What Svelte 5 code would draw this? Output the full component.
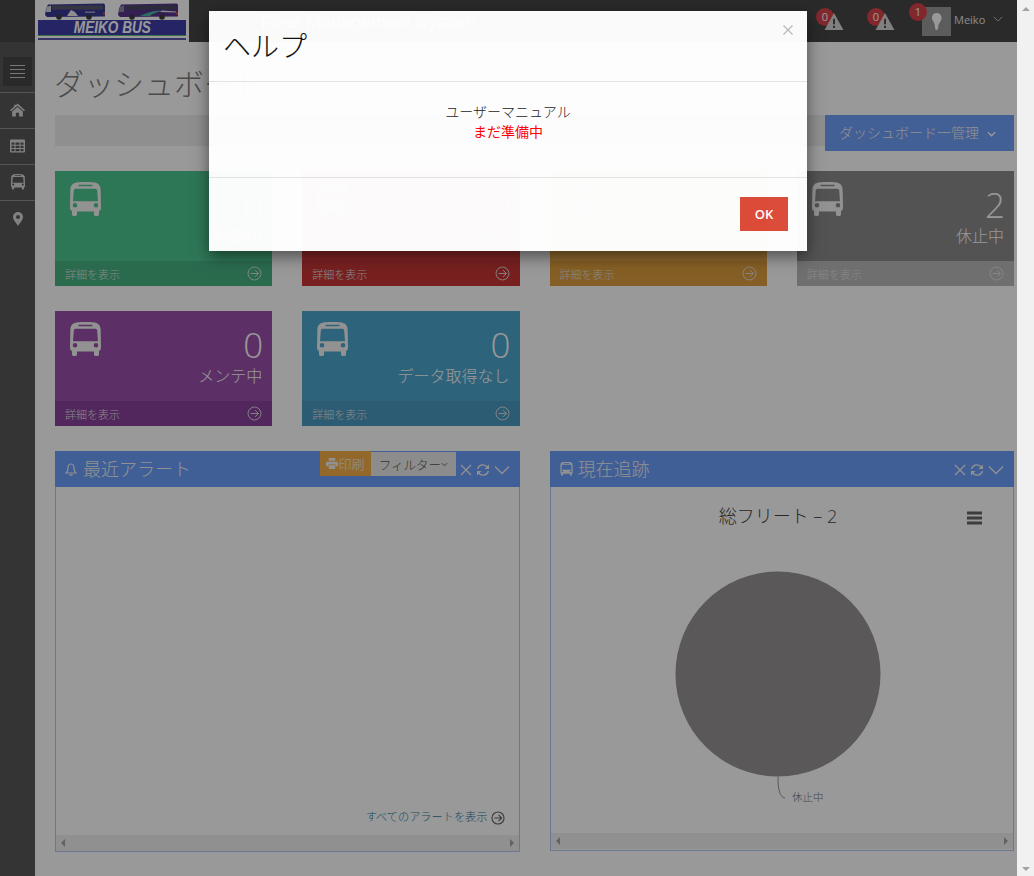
<script>
  const cards = [
    { cls: 'green', n: '0', label: '稼働中' },
    { cls: 'red', n: '0', label: '停止' },
    { cls: 'orange', n: '0', label: 'アイドル' },
    { cls: 'gray', n: '2', label: '休止中' },
    { cls: 'purple', n: '0', label: 'メンテ中' },
    { cls: 'teal', n: '0', label: 'データ取得なし' }
  ];
  const busPath = 'M8 0.3C12 -0.1 19 -0.1 23 0.3C28 0.9 30.2 3 30.6 7L31 25C31 27.5 30.5 28.5 29 29V32.5C29 34.6 24 34.6 24 32.5V29.5H7V32.5C7 34.6 2 34.6 2 32.5V29C0.5 28.5 0 27.5 0 25L0.4 7C0.8 3 3 0.9 8 0.3ZM8.5 2.8V4.2H22.5V2.8ZM6 6.7C4.6 6.7 4 7.3 3.800 8.300L3 19.300H28L27.200 8.300C27 7.300 26.400 6.700 25 6.700ZM5 21A2.300 2.300 0 1 0 5.010 25.600A2.300 2.300 0 1 0 5 21ZM26 21A2.300 2.300 0 1 0 26.010 25.600A2.300 2.300 0 1 0 26 21Z';
</script>

{#snippet bus(cls)}
  <svg class={cls} viewBox="0 0 31 35" aria-hidden="true"><path fill-rule="evenodd" d={busPath} /></svg>
{/snippet}

{#snippet circleArrow(cls)}
  <svg class={cls} viewBox="0 0 16 16" aria-hidden="true"><circle cx="8" cy="8" r="6.9" /><path d="M3.8 8H12M8.6 4.4L12.2 8L8.6 11.6" /></svg>
{/snippet}

{#snippet panelTools()}
  <div class="tools">
    <svg viewBox="0 0 14 14"><path d="M2 2L12 12M12 2L2 12" /></svg>
    <svg viewBox="0 0 14 14"><path d="M1.6 6A5.5 5.5 0 0 1 11.4 4.2M12.4 8A5.5 5.5 0 0 1 2.6 9.8" /><path class="solid" d="M13 1.5V6H8.5ZM1 12.5V8H5.5Z" /></svg>
    <svg class="wide" viewBox="0 0 16 14"><path d="M1 3.5L8 10.5L15 3.5" /></svg>
  </div>
{/snippet}

<div class="screen">
  <div class="page">
    <header class="topbar">
      <div class="logo">
        <div class="buses">
          <svg class="logobus" viewBox="0 0 60 17" aria-hidden="true">
            <path d="M3 1.500L59 0.500L60 2V13.500L2 14L0 12L1 6Z" fill="#3a3a96" />
            <path d="M7 2.500H58V6.500H7Z" fill="#5b5b70" />
            <path d="M1.500 4L6 2.500V9H1Z" fill="#d8d8e6" />
            <path d="M22 13L26 7L30 9L33 13Z" fill="#eee" />
            <path d="M40 8.500H50V10H40Z" fill="#9a9ac8" />
            <path d="M58 9H60V12H58Z" fill="#c04040" />
            <circle cx="14" cy="14" r="2.800" fill="#3d3d3d" />
            <circle cx="44" cy="14" r="2.800" fill="#3d3d3d" />
          </svg>
          <svg class="logobus" viewBox="0 0 60 17" aria-hidden="true">
            <path d="M3 1.500L59 0.500L60 2V13.500L2 14L0 12L1 6Z" fill="#55348a" />
            <path d="M7 2.500H57V6.500H7Z" fill="#4a4a60" />
            <path d="M1.500 4L6 2.500V9H1Z" fill="#8c8ca0" />
            <path d="M22 13C30 9 38 7 44 8C38 9 34 11 32 13Z" fill="#4fb4a0" />
            <path d="M44 7.500L58 8.500V9.500L42 9Z" fill="#e8e8f0" />
            <path d="M58 9H60V12H58Z" fill="#c04040" />
            <circle cx="14" cy="14" r="2.800" fill="#3d3d3d" />
            <circle cx="44" cy="14" r="2.800" fill="#3d3d3d" />
          </svg>
        </div>
        <div class="banner"><span>MEIKO BUS</span></div>
        <div class="stripes"></div>
      </div>
      <div class="appname">Fleet Management System</div>
      <div class="status">
        <div class="alert"><span class="badge">0</span><svg viewBox="0 0 20 18"><path fill-rule="evenodd" d="M10 0L20 18H0ZM9 6V12H11V6ZM9 13.500V16H11V13.500Z" /></svg></div>
        <div class="alert"><span class="badge">0</span><svg viewBox="0 0 20 18"><path fill-rule="evenodd" d="M10 0L20 18H0ZM9 6V12H11V6ZM9 13.500V16H11V13.500Z" /></svg></div>
        <div class="user">
          <span class="badge top">1</span>
          <div class="avatar"><svg viewBox="0 0 29 29"><path d="M14.500 6C18 6 20 8.500 19.500 12C19 14.500 17 16 16.500 18C16 20 16.500 22 15 23C13.800 23.600 13 22 13 20C13 18 12 15 10.500 13C9 9.500 11 6 14.500 6Z" /></svg></div>
          <span class="uname">Meiko</span>
          <svg class="uchev" viewBox="0 0 12 7"><path d="M1 1L6 6L11 1" /></svg>
        </div>
      </div>
    </header>

    <div class="body">
      <nav class="side">
        <div class="toggle"><span></span><span></span><span></span><span></span></div>
        <div class="item"><svg viewBox="0 0 14 12"><path d="M7 0L14 6.200L13 7.200L7 2L1 7.200L0 6.200L4 2.700V1H5.500V1.500ZM7 3.200L12 7.500V12H8.500V8.500H5.500V12H2V7.500Z" /></svg></div>
        <div class="item"><svg viewBox="0 0 15 13"><path fill-rule="evenodd" d="M1 0H14A1 1 0 0 1 15 1V12A1 1 0 0 1 14 13H1A1 1 0 0 1 0 12V1A1 1 0 0 1 1 0ZM1.500 3V5.300H4.500V3ZM5.500 3V5.300H9.500V3ZM10.500 3V5.300H13.500V3ZM1.500 6.300V8.500H4.500V6.300ZM5.500 6.300V8.500H9.500V6.300ZM10.500 6.300V8.500H13.500V6.300ZM1.500 9.500V11.700H4.500V9.500ZM5.500 9.500V11.700H9.500V9.500ZM10.500 9.500V11.700H13.500V9.500Z" /></svg></div>
        <div class="item">{@render bus('sidebus')}</div>
        <div class="item last"><svg class="pin" viewBox="0 0 10 14"><path fill-rule="evenodd" d="M5 0A5 5 0 0 1 10 5C10 8 6.500 11 5 14C3.500 11 0 8 0 5A5 5 0 0 1 5 0ZM5 3A2 2 0 1 0 5.010 7A2 2 0 1 0 5 3Z" /></svg></div>
      </nav>

      <main class="main">
        <h1>ダッシュボード</h1>
        <div class="barrow">
          <div class="crumb"></div>
          <div class="manage">ダッシュボード一管理 <svg viewBox="0 0 10 6"><path d="M1 1L5 5L9 1" /></svg></div>
        </div>

        <div class="grid">
          {#each cards as c}
            <section class="card {c.cls}">
              <div class="cbody">
                {@render bus('cardbus')}
                <div class="cnum">
                  <div class="num">{c.n}</div>
                  <div class="lab">{c.label}</div>
                </div>
              </div>
              <div class="cfoot"><span>詳細を表示</span>{@render circleArrow('carrow')}</div>
            </section>
          {/each}
        </div>

        <div class="panels">
          <section class="panel left">
            <div class="phead">
              <svg class="bell" viewBox="0 0 12 13"><path d="M6 1C3.500 1 3 3 3 5C3 8 2 9 1 10H11C10 9 9 8 9 5C9 3 8.500 1 6 1ZM4.500 11.300A1.600 1.600 0 0 0 7.500 11.300" /></svg>
              <span class="ptitle">最近アラート</span>
              <div class="btns">
                <span class="print"><svg viewBox="0 0 13 12"><path d="M3 0H10V3H3ZM1 4H12A1 1 0 0 1 13 5V9H10.500V7H2.500V9H0V5A1 1 0 0 1 1 4ZM3 8H10V12H3Z" /></svg>印刷</span>
                <span class="filter">フィルター<svg viewBox="0 0 8 5"><path d="M1 1L4 4L7 1" /></svg></span>
              </div>
              {@render panelTools()}
            </div>
            <div class="pbody">
              <div class="viewall">すべてのアラートを表示{@render circleArrow('varrow')}</div>
            </div>
            <div class="hscroll"><i class="la"></i><i class="ra"></i></div>
          </section>

          <section class="panel right">
            <div class="phead">
              <svg class="minibus" viewBox="0 0 31 35"><path fill-rule="evenodd" d={busPath} /></svg>
              <span class="ptitle">現在追跡</span>
              {@render panelTools()}
            </div>
            <div class="pbody chart">
              <svg viewBox="0 0 462 346" aria-label="総フリート">
                <text class="ctitle" x="227" y="36" text-anchor="middle">総フリート – 2</text>
                <path class="menu" d="M416 26H431M416 31H431M416 36H431" />
                <circle class="pie" cx="227" cy="187" r="102.500" />
                <path class="lead" d="M227 290C227 300 228 310 234 311" />
                <text class="legend" x="241" y="314">休止中</text>
              </svg>
            </div>
            <div class="hscroll"><i class="la"></i><i class="ra"></i></div>
          </section>
        </div>
      </main>
    </div>

    <div class="overlay">
      <div class="modal">
        <div class="mhead">
          <h2>ヘルプ</h2>
          <svg class="mclose" viewBox="0 0 10 10"><path d="M0.500 0.500L9.500 9.500M9.500 0.500L0.500 9.500" /></svg>
        </div>
        <div class="mbody">
          <div>ユーザーマニュアル</div>
          <div class="wip">まだ準備中</div>
        </div>
        <div class="mfoot"><button type="button">OK</button></div>
      </div>
    </div>
  </div>

  <aside class="vscroll"><i class="up"></i><i class="down"></i></aside>
</div>

<style>
  :global(body) { margin: 0; overflow: hidden; background: #fff; }
  .screen {
    display: flex; width: 1034px; height: 876px;
    font-family: "Open Sans", "Noto Sans CJK JP", sans-serif;
  }
  .page { position: relative; width: 1017px; height: 876px; overflow: hidden; display: flex; flex-direction: column; }
  .vscroll { width: 17px; background: #f1f1f1; display: flex; flex-direction: column; justify-content: space-between; align-items: center; padding: 7px 0 5px; box-sizing: border-box; }
  .vscroll i { width: 0; height: 0; border-left: 4px solid transparent; border-right: 4px solid transparent; }
  .vscroll .up { border-bottom: 4px solid #a3a3a3; }
  .vscroll .down { border-top: 4px solid #a3a3a3; }

  .topbar { height: 42px; flex: none; background: #474747; display: flex; align-items: stretch; padding-left: 35px; }
  .logo { width: 154px; background: #fff; padding: 3px 3px 0; box-sizing: border-box; display: flex; flex-direction: column; }
  .buses { display: flex; gap: 13px; padding-left: 7px; height: 17px; flex: none; }
  .logobus { width: 60px; height: 17px; }
  .banner { height: 15px; width: 148px; background: #3f3fa8; color: #fff; font: italic 700 16px/15px "Liberation Sans", sans-serif; text-align: center; overflow: hidden; }
  .banner span { display: inline-block; transform: scaleX(0.85); }
  .stripes { width: 148px; border-top: 1px solid #62c078; border-bottom: 2px solid #5a5ab0; height: 2px; }
  .appname { margin-left: 72px; color: #fff; font: 18px/44px "Liberation Sans", sans-serif; }
  .status { margin-left: auto; position: relative; display: flex; align-items: flex-start; padding-right: 13px; }
  .alert { position: relative; width: 51px; height: 42px; left: -9px; }
  .alert svg { position: absolute; left: 8px; top: 13px; width: 20px; height: 17px; fill: #d6d6d6; }
  .badge { position: absolute; width: 18px; height: 18px; border-radius: 50%; background: #d9444c; color: #fff; font-size: 11px; line-height: 18px; text-align: center; left: 0; top: 8px; }
  .badge.top { left: -13px; top: 3px; }
  .user { position: relative; display: flex; align-items: flex-start; width: 82px; margin-left: -5px; }
  .avatar { width: 29px; height: 29px; margin-top: 7px; background: #9a9a9a; }
  .avatar svg { width: 29px; height: 29px; fill: #fff; display: block; }
  .uname { font-size: 11px; color: #e4e4e4; margin: 13px 0 0 3px; line-height: 14px; }
  .uchev { width: 10px; height: 6px; margin: 16px 0 0 8px; fill: none; stroke: #d0d0d0; stroke-width: 1; }

  .body { flex: 1; display: flex; min-height: 0; }
  .side { width: 35px; flex: none; background: #585858; padding-top: 15px; box-sizing: border-box; }
  .toggle { width: 29px; height: 29px; margin: 0 0 6px 3px; background: #464646; display: flex; flex-direction: column; justify-content: center; align-items: center; gap: 3px; }
  .toggle span { width: 15px; height: 1px; background: #c8c8c8; }
  .item { height: 34px; border-top: 1px solid #8e8e8e; display: flex; align-items: center; justify-content: center; padding-bottom: 1px; }
  .item.last { height: 35px; }
  .item svg { fill: #d8d8d8; width: 15px; height: 14px; }
  .item svg.sidebus { width: 14px; height: 16px; }
  .item svg.pin { width: 10px; height: 14px; }

  .main { flex: 1; padding: 0 3px 0 20px; min-width: 0; }
  h1 { margin: 19px 0 0 -1px; height: 54px; font-size: 30px; font-weight: 300; line-height: 46px; color: #7d7d7d; }
  .barrow { display: flex; align-items: flex-start; height: 56px; }
  .crumb { flex: 1; height: 31px; background: #eee; }
  .manage { width: 189px; height: 36px; box-sizing: border-box; background: #6f9ffa; color: #f2f2f2; font-size: 14px; font-weight: 300; line-height: 36px; padding-left: 14px; }
  .manage svg { width: 9px; height: 6px; margin-left: 4px; fill: none; stroke: #fff; stroke-width: 1.500; vertical-align: 1px; }

  .grid { display: grid; grid-template-columns: repeat(4, 1fr); column-gap: 30px; row-gap: 25px; }
  .card { height: 115px; display: flex; flex-direction: column; color: #fff; }
  .cbody { flex: 1; display: flex; justify-content: space-between; padding: 11px 9px 0 15px; }
  .cardbus { width: 31px; height: 35px; fill: #f4f4f4; flex: none; }
  .cnum { text-align: right; }
  .num { font-size: 35px; font-weight: 300; line-height: 40px; margin-top: 3px; }
  .lab { font-size: 16px; font-weight: 300; line-height: 22px; margin: 0 1px 0 0; }
  .cfoot { height: 25px; display: flex; align-items: center; justify-content: space-between; padding: 0 10px; font-size: 11px; color: #e0e0e0; font-weight: 300; }
  .carrow { width: 15px; height: 15px; fill: none; stroke: #e0e0e0; stroke-width: 1; }
  .green { background: #4dc68f; } .green .cfoot { background: #46b382; }
  .red { background: #d63c3c; } .red .cfoot { background: #c93636; }
  .orange { background: #e9aa4c; } .orange .cfoot { background: #de9f3e; }
  .gray { background: #8a8a8c; } .gray .cfoot { background: #bababa; }
  .purple { background: #9a50aa; } .purple .cfoot { background: #88419b; }
  .teal { background: #4ea6cf; } .teal .cfoot { background: #4a99c0; }

  .panels { display: grid; grid-template-columns: 1fr 1fr; column-gap: 30px; margin-top: 25px; align-items: start; }
  .panel { box-sizing: border-box; border: 1px solid #b2c9f2; display: flex; flex-direction: column; }
  .panel.left { height: 401px; }
  .panel.right { height: 400px; }
  .phead { margin: -1px -1px 0; height: 36px; flex: none; background: #6a9ffa; color: #f2f2f2; display: flex; align-items: center; position: relative; padding: 0 10px; }
  .bell { width: 12px; height: 13px; fill: none; stroke: #f2f2f2; stroke-width: 1.200; margin-right: 6px; }
  .minibus { width: 13px; height: 14px; fill: #f2f2f2; margin-right: 5px; }
  .ptitle { font-size: 18px; font-weight: 300; line-height: 36px; }
  .btns { position: absolute; left: 265px; top: 0; display: flex; }
  .print { width: 51px; height: 25px; background: #f3b049; display: flex; align-items: center; justify-content: center; font-size: 13px; font-weight: 300; }
  .print svg { width: 12px; height: 11px; fill: #f2f2f2; }
  .filter { width: 85px; height: 24px; margin-top: 1px; background: #eaeaea; color: #555; display: flex; align-items: center; justify-content: center; font-size: 12.500px; font-weight: 300; }
  .filter svg { width: 7px; height: 5px; fill: none; stroke: #555; }
  .tools { margin-left: auto; margin-top: 2px; display: flex; align-items: center; gap: 3px; }
  .tools svg { width: 14px; height: 14px; fill: none; stroke: #f2f2f2; stroke-width: 1.300; }
  .tools svg.wide { width: 16px; margin-left: 1px; }
  .tools .solid { fill: #f2f2f2; stroke: none; }
  .pbody { flex: 1; min-height: 0; position: relative; }
  .viewall { position: absolute; right: 14px; bottom: 10px; display: flex; align-items: center; gap: 3px; font-size: 11.200px; font-weight: 300; color: #2a7ca0; line-height: 16px; }
  .varrow { width: 14px; height: 14px; fill: none; stroke: #666; stroke-width: 1.300; margin-top: 3px; }
  .chart svg { display: block; width: 462px; height: 346px; }
  .ctitle { font-size: 18px; font-weight: 300; fill: #444; }
  .menu { stroke: #666; stroke-width: 3; }
  .pie { fill: #969393; }
  .lead { fill: none; stroke: #969393; stroke-width: 1; }
  .legend { font-size: 10.500px; font-weight: 300; fill: #777; }
  .hscroll { height: 16px; flex: none; background: #f1f1f1; display: flex; justify-content: space-between; align-items: center; padding: 0 5px; }
  .right .hscroll { margin-bottom: 1px; }
  .hscroll i { width: 0; height: 0; border-top: 4px solid transparent; border-bottom: 4px solid transparent; }
  .hscroll .la { border-right: 4px solid #a3a3a3; }
  .hscroll .ra { border-left: 4px solid #a3a3a3; }

  .overlay { position: absolute; inset: 0; background: rgba(0, 0, 0, 0.4); }
  .modal { width: 598px; height: 240px; margin: 11px 0 0 209px; background: #fff; opacity: 0.98; box-shadow: 0 5px 15px rgba(0, 0, 0, 0.5); display: flex; flex-direction: column; color: #222; }
  .mhead { height: 71px; box-sizing: border-box; border-bottom: 1px solid #e5e5e5; position: relative; padding: 15px 14px; flex: none; }
  h2 { margin: 0; font-size: 28px; font-weight: 300; line-height: 41px; color: #111; }
  .mclose { position: absolute; right: 14px; top: 14px; width: 10px; height: 10px; fill: none; stroke: #bbb; stroke-width: 1.200; }
  .mbody { height: 95px; box-sizing: border-box; padding-top: 20px; text-align: center; font-size: 14px; line-height: 20px; font-weight: 300; flex: none; }
  .wip { color: #f00; font-weight: 400; }
  .mfoot { flex: 1; border-top: 1px solid #e5e5e5; padding: 19px 19px 0; display: flex; justify-content: flex-end; align-items: flex-start; }
  button { width: 48px; height: 34px; border: 0; border-radius: 0; padding: 0; background: #dd4b39; color: #fff; font: 600 13px "Open Sans", sans-serif; }
</style>
